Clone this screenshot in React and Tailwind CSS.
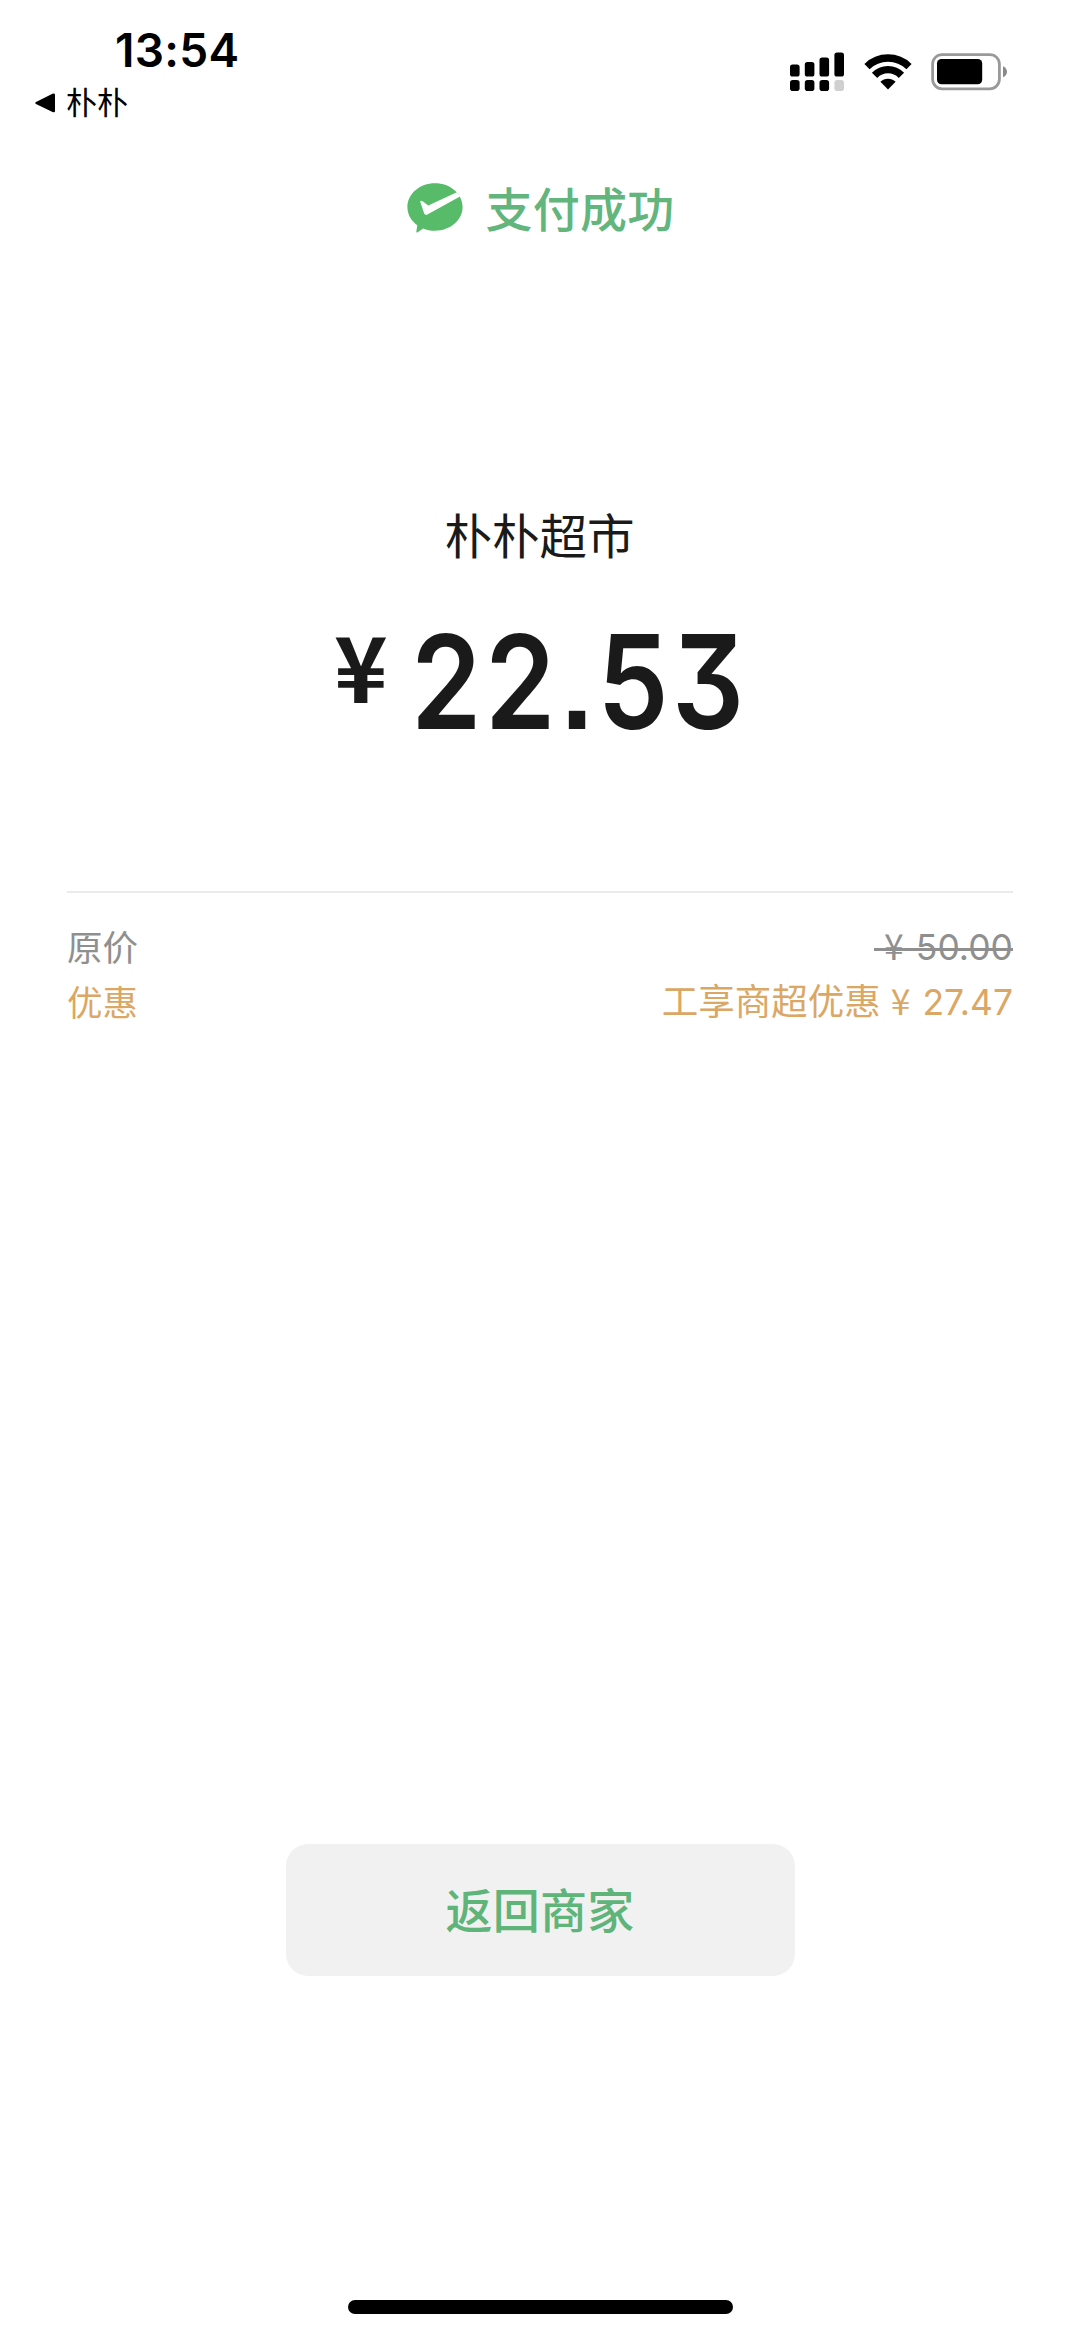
const priceRows = [
  { label: '原价', note: '', value: ' 50.00', color: 'text-[#8f8f8f]', struck: true },
  { label: '优惠', note: '工享商超优惠', value: ' 27.47', color: 'text-[#dba765]', struck: false },
];

function SignalIcon() {
  return (
    <svg className="w-[56px] h-[40px]" viewBox="0 0 56 40">
      <rect x="0" y="12.5" width="9.6" height="12" rx="2.6" />
      <rect x="14.8" y="10" width="9.6" height="14.5" rx="2.6" />
      <rect x="29.5" y="5.5" width="9.6" height="19" rx="2.6" />
      <rect x="44.4" y="0.5" width="9.6" height="24" rx="2.6" />
      <rect x="0" y="28" width="9.6" height="11" rx="2.8" />
      <rect x="14.8" y="28" width="9.6" height="11" rx="2.8" />
      <rect x="29.5" y="28" width="9.6" height="11" rx="2.8" />
      <rect x="44.4" y="28" width="9.6" height="11" rx="2.8" fill="#d0d0d0" />
    </svg>
  );
}

function WifiIcon() {
  return (
    <svg className="w-[48px] h-[36px]" viewBox="0 0 48 36">
      <g fill="none" stroke="#000" strokeWidth="7.4">
        <path d="M3 12.6A30 30 0 0 1 45 12.6" />
        <path d="M10.6 21.4A18.5 18.5 0 0 1 37.4 21.4" />
      </g>
      <path d="M24 35.6 16.4 27.8A10.8 10.8 0 0 1 31.6 27.8Z" />
    </svg>
  );
}

function BatteryIcon() {
  return (
    <svg className="w-[76px] h-[38px]" viewBox="0 0 76 38">
      <rect x="1.6" y="1.6" width="66.8" height="34.2" rx="9.5" fill="none" stroke="#999" strokeWidth="2.8" />
      <rect x="6" y="6" width="45.2" height="25.2" rx="4.5" />
      <path d="M72 13.2q4 2 4 5.5t-4 5.5z" fill="#8a8a8a" />
    </svg>
  );
}

function PayIcon() {
  return (
    <svg className="w-[56px] h-[50px]" viewBox="0 0 56 50">
      <path
        fill="#57bb6a"
        d="M28 0.3C43.3 0.3 55.6 10.9 55.6 24S43.3 47.7 28 47.7C23.7 47.7 19.7 46.9 16.1 45.4L10.8 49.2Q9.2 50 9.4 48.2L10.3 42.2C4.2 37.9 0.4 31.4 0.4 24 0.4 10.9 12.7 0.3 28 0.3Z"
      />
      <path
        fill="#fff"
        d="M13.1 18.4Q14.4 17.2 16 18.6L21.3 22.6 49.8 9.3 53 13.4 20.4 31.5Q18.2 32.6 17.2 30.4Z"
      />
    </svg>
  );
}

export default function App() {
  return (
    <div className="flex flex-col w-full h-[2336px] bg-white font-['Inter','Noto_Sans_CJK_SC',sans-serif] overflow-hidden">
      {/* Status bar */}
      <header className="flex justify-between h-[150px] pl-[35px] pr-[73px]">
        <div className="pt-[25px]">
          <div className="ml-[80px] text-[46px] leading-[50px] font-semibold tracking-[0.3px] text-black">13:54</div>
          <div className="flex items-center gap-[11px] mt-[4px]">
            <svg className="w-[20px] h-[20px]" viewBox="0 0 20 20">
              <path d="M1 9 17.5 0.8Q20 0 20 2V18Q20 20 17.5 19L1 11Q-0.5 10 1 9Z" />
            </svg>
            <span className="pt-[1px] text-[31px] leading-[46px] text-black">朴朴</span>
          </div>
        </div>
        <div className="flex items-start pt-[52px]">
          <SignalIcon />
          <div className="ml-[18px] mt-[2px]">
            <WifiIcon />
          </div>
          <div className="ml-[19px] mt-[1px]">
            <BatteryIcon />
          </div>
        </div>
      </header>

      <div className="flex justify-center items-center h-[116px] gap-[22px] pl-[2px]">
        <PayIcon />
        <h1 className="pt-[3px] text-[47px] leading-[60px] font-medium tracking-[0.3px] text-[#62b57c]">支付成功</h1>
      </div>

      {/* Merchant and amount */}
      <section className="flex flex-col items-center pt-[236px] h-[625px] text-[#1a1a1a]">
        <p className="pr-px text-[47.5px] leading-[70px]">朴朴超市</p>
        <div className="flex items-start self-start ml-[334px] mt-[40px]">
          <span className="font-['Noto_Sans_CJK_SC',sans-serif] font-bold text-[91px] leading-[102px]">¥</span>
          <span className="ml-[23px] text-[130px] leading-[140px] font-semibold tracking-[4px] [font-feature-settings:'cv09','ss07'] scale-x-[0.87] origin-left">
            22.53
          </span>
        </div>
      </section>

      {/* Price breakdown */}
      <section className="mx-[67px] border-t-2 border-[#ebebeb] pt-[27px]">
        {priceRows.map((row) => (
          <div key={row.label} className={`flex justify-between h-[55px] text-[35.5px] leading-[55px] ${row.color}`}>
            <span className="font-['Noto_Sans_CJK_SC',sans-serif] -mt-[2px]">{row.label}</span>
            <span className="relative -mt-[3px]">
              {row.note && <span className="text-[36.5px]">{row.note}</span>}
              <span className="font-['Noto_Sans_CJK_SC',sans-serif] tracking-[2px]">{'\u00a0¥'}</span>
              {row.value}
              {row.struck && <span className="absolute inset-x-0 top-[31px] h-[3px] bg-[#8f8f8f]" />}
            </span>
          </div>
        ))}
      </section>

      <div className="flex-1 flex justify-center items-end">
        <button className="w-[509px] h-[132px] pt-[2px] rounded-[22px] bg-[#f1f1f1] text-[47px] font-medium tracking-[0.3px] text-[#5fb47a]">
          返回商家
        </button>
      </div>

      {/* Home indicator */}
      <footer className="flex justify-center items-end h-[360px] pb-[22px] pl-[1px]">
        <div className="w-[385px] h-[14px] rounded-full bg-black" />
      </footer>
    </div>
  );
}
